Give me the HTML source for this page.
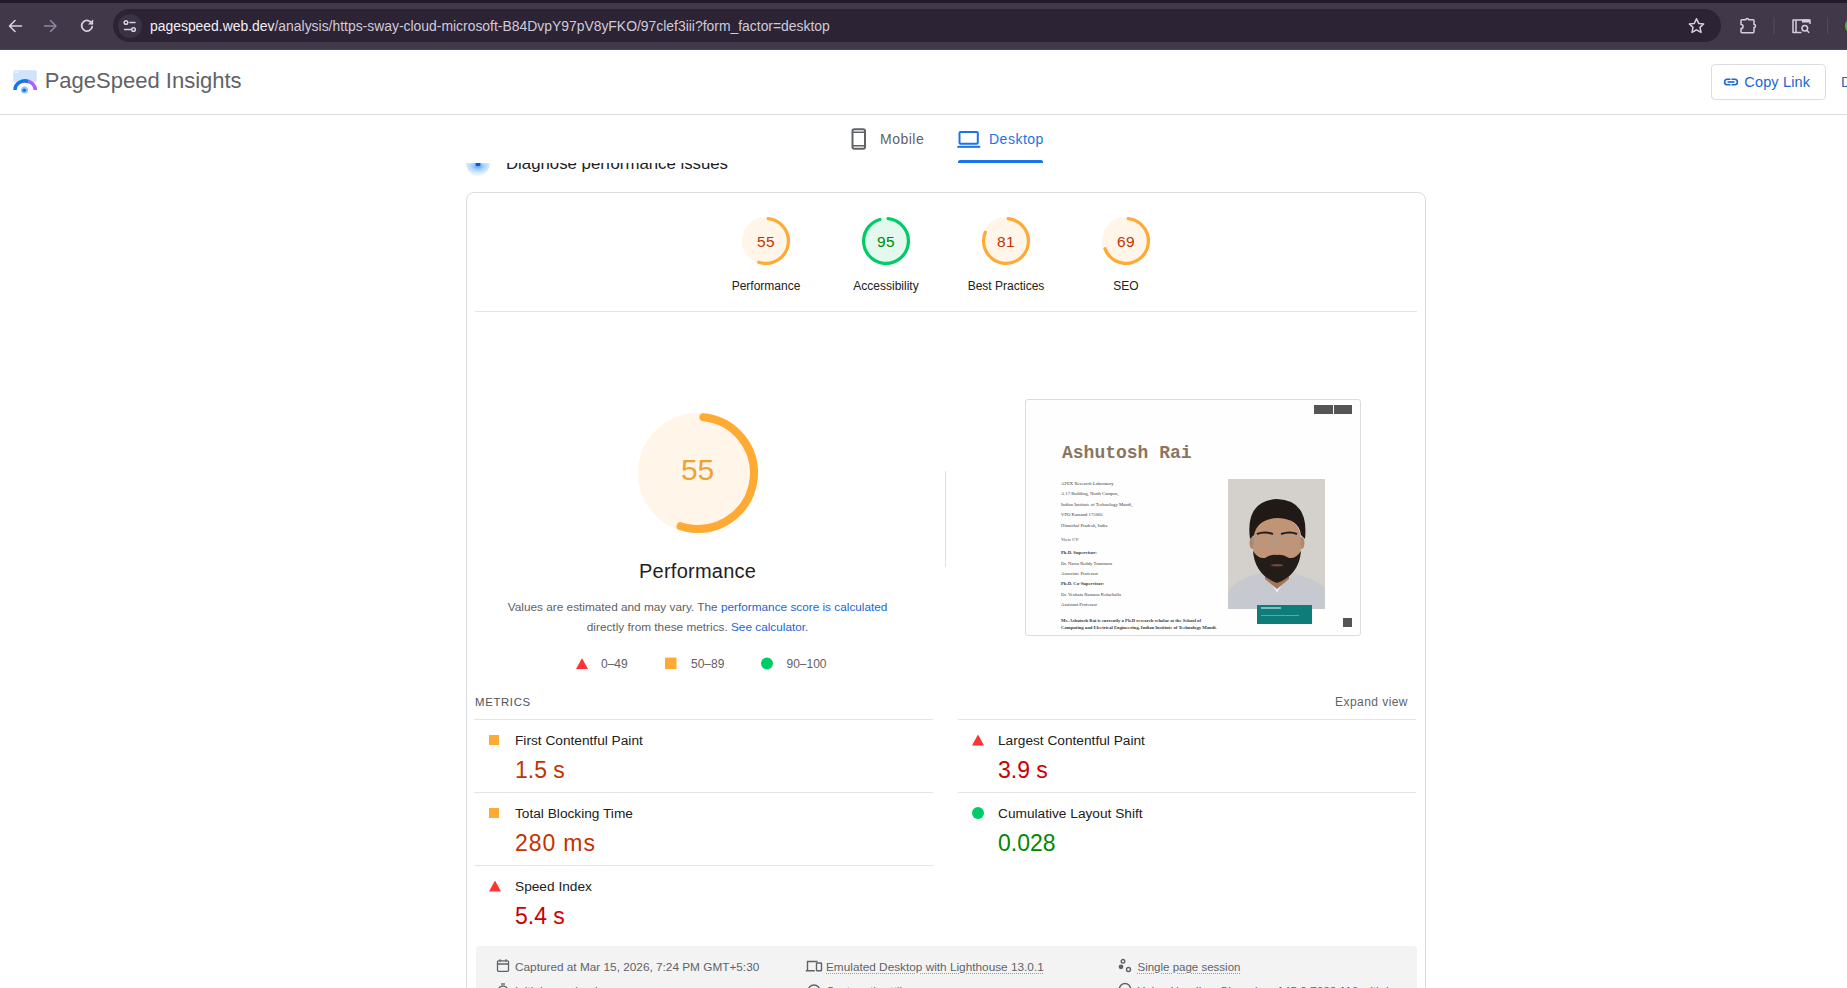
<!DOCTYPE html>
<html><head><meta charset="utf-8">
<style>
*{margin:0;padding:0;box-sizing:border-box}
html,body{width:1847px;height:988px;overflow:hidden;background:#fff;font-family:"Liberation Sans",sans-serif;color:#212121}
.a{position:absolute;white-space:nowrap}
svg{position:absolute;overflow:visible}
/* chrome */
#chrome{position:absolute;left:0;top:0;width:1847px;height:50px;background:#413849;border-bottom:1px solid #4a4850}
#strip{position:absolute;left:0;top:0;width:1847px;height:3px;background:#221b2c}
#omni{position:absolute;left:113px;top:9.3px;width:1608px;height:32.8px;border-radius:17px;background:#2c2435}
#siteinfo{position:absolute;left:118px;top:14px;width:24px;height:24px;border-radius:12px;background:#3a3245}
.url{font-size:13.91px;line-height:14px;top:19px;left:150px;color:#d0cad8}
.url b{font-weight:normal;color:#f2eef6}
/* psi header */
#hdr{position:absolute;left:0;top:50px;width:1847px;height:65px;background:#fff;border-bottom:1px solid #dadce0}
.card{position:absolute;left:466px;top:192px;width:960px;height:900px;border:1px solid #dadce0;border-radius:8px;background:#fff}
.hr{position:absolute;height:1px;background:#e4e4e4}
.rt{font-size:11.8px;line-height:12px;color:#5f6368}
.tl{left:35px;font-family:'Liberation Serif',serif;font-size:4.7px;line-height:6px;color:#3a3a3a}
.ul{text-decoration:underline dotted #9a9a9a;text-underline-offset:2px}
</style></head><body>

<!-- ============ BROWSER CHROME ============ -->
<div id="chrome">
  <div id="strip"></div>
  <svg style="left:0;top:0" width="110" height="50">
    <g fill="none" stroke="#d8d0e0" stroke-width="1.6" stroke-linecap="round" stroke-linejoin="round">
      <path d="M21.5 26H9.5M15 20.5L9.5 26l5.5 5.5"/>
    </g>
    <g fill="none" stroke="#8e86a0" stroke-width="1.6" stroke-linecap="round" stroke-linejoin="round">
      <path d="M44.5 26h11.5M50.5 20.5l5.5 5.5-5.5 5.5"/>
    </g>
    <g fill="none" stroke="#d8d0e0" stroke-width="1.8" stroke-linecap="round">
      <path d="M91.8 23.6A5.3 5.3 0 1 0 92.2 26.6"/>
    </g>
    <path d="M93.2 19.3v5.3h-5.3z" fill="#d8d0e0"/>
  </svg>
  <div id="omni"></div>
  <div id="siteinfo"></div>
  <svg style="left:118px;top:14px" width="24" height="24">
    <g fill="none" stroke="#d8d0e0" stroke-width="1.5" stroke-linecap="round">
      <circle cx="8" cy="8.5" r="1.8"/><path d="M12 8.5h5"/>
      <circle cx="15.5" cy="15.5" r="1.8"/><path d="M6.5 15.5h6.5"/>
    </g>
  </svg>
  <div class="a url"><b>pagespeed.web.dev</b>/analysis/https-sway-cloud-microsoft-B84DvpY97pV8yFKO/97clef3iii?form_factor=desktop</div>
  <svg style="left:1660px;top:0" width="187" height="50">
    <g fill="none" stroke="#d8d0e0" stroke-width="1.5" stroke-linejoin="round">
      <path d="M36.5 18.8l2.2 4.6 5 .6-3.7 3.4 1 5-4.5-2.5-4.5 2.5 1-5-3.7-3.4 5-.6z"/>
      <path d="M82 19.8H85.8A1.4 1.4 0 0 1 88.6 19.8H93a1 1 0 0 1 1 1V24.4A1.5 1.5 0 0 1 94 27.4V31.8a1 1 0 0 1-1 1H82a1 1 0 0 1-1-1V28.6A2.1 2.1 0 0 0 81 24.4V20.8a1 1 0 0 1 1-1z"/>
      <path d="M141.5 32.5h-8.5v-12.5h17v4"/>
      <circle cx="144.8" cy="28.2" r="2.8"/><path d="M147 30.5l2.2 2.3"/>
      <path d="M136 20.5v12"/>
    </g>
    <rect x="142" y="19.5" width="7.5" height="3" fill="#d8d0e0"/>
    <rect x="113.5" y="17" width="1" height="17" fill="#554d62"/>
    <rect x="167.2" y="17" width="1" height="17" fill="#554d62"/>
    <circle cx="193" cy="26" r="8" fill="#4caf50"/>
  </svg>
</div>

<!-- ============ PSI HEADER ============ -->
<div id="hdr"></div>
<svg style="left:12px;top:69px" width="26" height="26" viewBox="0 0 26 26">
  <rect x="1.3" y="1.2" width="23.4" height="12" rx="1.5" fill="#cfe3fb"/>
  <rect x="2.5" y="2.5" width="4" height="1.2" fill="#fff" opacity=".8"/>
  <path d="M3 21a10 9 0 0 1 13.5-8.5" fill="none" stroke="#1a73e8" stroke-width="3.6"/>
  <path d="M16.5 12.5a10 9 0 0 1 6.8 8.5" fill="none" stroke="#b15cf2" stroke-width="3.6"/>
  <circle cx="12.5" cy="21" r="3.6" fill="#8ec5fb"/>
  <circle cx="12.3" cy="21.3" r="1.8" fill="#1a73e8"/>
</svg>
<div class="a" style="left:44.7px;top:70.1px;font-size:22px;line-height:22px;color:#5f6368">PageSpeed Insights</div>
<div class="a" style="left:1711px;top:64px;width:115px;height:36px;border:1px solid #dadce0;border-radius:4px"></div>
<svg style="left:1722px;top:74px" width="18" height="16" viewBox="0 0 18 16">
  <g fill="none" stroke="#1a66d0" stroke-width="1.6">
    <path d="M8.5 5.3H5.3a2.7 2.7 0 0 0 0 5.4h3.2M9.5 5.3h3.2a2.7 2.7 0 0 1 0 5.4H9.5"/>
    <path d="M5.5 8h7"/>
  </g>
</svg>
<div class="a" style="left:1744.3px;top:75px;font-size:14.5px;line-height:14.5px;letter-spacing:.15px;color:#1a66d0">Copy Link</div>
<div class="a" style="left:1841px;top:75px;font-size:14.5px;line-height:14.5px;color:#1a66d0">D</div>

<!-- ============ CONTENT (scrolling) ============ -->
<svg style="left:462px;top:150px" width="32" height="28" viewBox="0 0 32 28">
  <defs><radialGradient id="dg" cx="50%" cy="30%" r="65%"><stop offset="0" stop-color="#5aa6f2"/><stop offset=".45" stop-color="#b5d9fb"/><stop offset="1" stop-color="#f2f7ff"/></radialGradient></defs>
  <path d="M4 12a12 14 0 0 0 24 0z" fill="url(#dg)"/>
  <rect x="13.5" y="12.5" width="5" height="3.5" rx="1.5" fill="#0b5ccc"/>
</svg>
<div class="a" style="left:506px;top:154.8px;font-size:16.8px;line-height:17px;color:#202124">Diagnose performance issues</div>

<div class="card"></div>

<!-- small gauges -->
<svg style="left:742px;top:216.5px" width="48" height="48" viewBox="0 0 120 120">
  <circle cx="60" cy="60" r="56" fill="#fa3" stroke="#fa3" stroke-width="8" opacity=".1"/>
  <circle cx="60" cy="60" r="56" fill="none" stroke="#fa3" stroke-width="8" stroke-linecap="round" stroke-dasharray="188.1 400" transform="rotate(-84.5 60 60)"/>
</svg>
<svg style="left:862px;top:216.5px" width="48" height="48" viewBox="0 0 120 120">
  <circle cx="60" cy="60" r="56" fill="#0c6" stroke="#0c6" stroke-width="8" opacity=".1"/>
  <circle cx="60" cy="60" r="56" fill="none" stroke="#0c6" stroke-width="8" stroke-linecap="round" stroke-dasharray="328.9 400" transform="rotate(-84.5 60 60)"/>
</svg>
<svg style="left:982px;top:216.5px" width="48" height="48" viewBox="0 0 120 120">
  <circle cx="60" cy="60" r="56" fill="#fa3" stroke="#fa3" stroke-width="8" opacity=".1"/>
  <circle cx="60" cy="60" r="56" fill="none" stroke="#fa3" stroke-width="8" stroke-linecap="round" stroke-dasharray="279.6 400" transform="rotate(-84.5 60 60)"/>
</svg>
<svg style="left:1102px;top:216.5px" width="48" height="48" viewBox="0 0 120 120">
  <circle cx="60" cy="60" r="56" fill="#fa3" stroke="#fa3" stroke-width="8" opacity=".1"/>
  <circle cx="60" cy="60" r="56" fill="none" stroke="#fa3" stroke-width="8" stroke-linecap="round" stroke-dasharray="237.4 400" transform="rotate(-84.5 60 60)"/>
</svg>
<div class="a" style="left:716px;width:100px;text-align:center;top:234px;font-size:15.5px;line-height:16px;letter-spacing:.5px;color:#c33300">55</div>
<div class="a" style="left:836px;width:100px;text-align:center;top:234px;font-size:15.5px;line-height:16px;letter-spacing:.5px;color:#080">95</div>
<div class="a" style="left:956px;width:100px;text-align:center;top:234px;font-size:15.5px;line-height:16px;letter-spacing:.5px;color:#c33300">81</div>
<div class="a" style="left:1076px;width:100px;text-align:center;top:234px;font-size:15.5px;line-height:16px;letter-spacing:.5px;color:#c33300">69</div>
<div class="a" style="left:706px;width:120px;text-align:center;top:280.4px;font-size:12px;line-height:12px">Performance</div>
<div class="a" style="left:826px;width:120px;text-align:center;top:280.4px;font-size:12px;line-height:12px">Accessibility</div>
<div class="a" style="left:946px;width:120px;text-align:center;top:280.4px;font-size:12px;line-height:12px">Best Practices</div>
<div class="a" style="left:1066px;width:120px;text-align:center;top:280.4px;font-size:12px;line-height:12px">SEO</div>
<div class="hr" style="left:475px;top:311px;width:942px"></div>

<!-- big gauge -->
<svg style="left:637.6px;top:412.6px" width="120" height="120" viewBox="0 0 120 120">
  <circle cx="60" cy="60" r="56" fill="#fa3" stroke="#fa3" stroke-width="8" opacity=".1"/>
  <circle cx="60" cy="60" r="56" fill="none" stroke="#fa3" stroke-width="8" stroke-linecap="round" stroke-dasharray="188.1 400" transform="rotate(-84.5 60 60)"/>
</svg>
<div class="a" style="left:597.6px;width:200px;text-align:center;top:455px;font-size:30px;line-height:30px;color:#eea232">55</div>
<div class="a" style="left:547.6px;width:300px;text-align:center;top:560.9px;font-size:20px;line-height:20px;letter-spacing:.25px;color:#212121">Performance</div>
<div class="a" style="left:447.6px;width:500px;text-align:center;top:596.5px;font-size:11.8px;line-height:20px;color:#616161;white-space:normal">Values are estimated and may vary. The <span style="color:#1b66d0">performance score is calculated</span><br>directly from these metrics. <span style="color:#1b66d0">See calculator.</span></div>
<svg style="left:570px;top:650px" width="270" height="25">
  <path d="M12 8.2l6 10.8H6z" fill="#f33"/>
  <rect x="95" y="7.6" width="11.5" height="11.5" fill="#fa3"/>
  <circle cx="197" cy="13.5" r="6" fill="#0c6"/>
</svg>
<div class="a" style="left:601px;top:657.8px;font-size:12px;line-height:12px;color:#616161">0–49</div>
<div class="a" style="left:691px;top:657.8px;font-size:12px;line-height:12px;color:#616161">50–89</div>
<div class="a" style="left:786.5px;top:657.8px;font-size:12px;line-height:12px;color:#616161">90–100</div>
<div class="a" style="left:945px;top:471px;width:1px;height:96px;background:#e0e0e0"></div>

<!-- screenshot thumb -->
<div id="thumb" class="a" style="left:1025px;top:399px;width:336px;height:237px;border:1px solid #dcdcdc;border-radius:3px;background:#fefefe;overflow:hidden">
    <div class="a" style="left:288px;top:5px;width:19px;height:8.5px;background:#555"></div>
  <div class="a" style="left:308px;top:5px;width:17.5px;height:8.5px;background:#555"></div>
  <div class="a" style="left:36px;top:44px;font-family:'Liberation Mono',monospace;font-weight:bold;font-size:18px;line-height:18px;color:#8a7560">Ashutosh Rai</div>
  <div class="a tl" style="top:81px">AFEX Research Laboratory</div>
  <div class="a tl" style="top:91.3px">A 17 Building, North Campus,</div>
  <div class="a tl" style="top:101.7px">Indian Institute of Technology Mandi,</div>
  <div class="a tl" style="top:112px">VPO Kamand 175005</div>
  <div class="a tl" style="top:122.7px">Himachal Pradesh, India</div>
  <div class="a tl" style="top:136.8px">View CV</div>
  <div class="a tl" style="top:150.3px;font-weight:bold">Ph.D. Supervisor:</div>
  <div class="a tl" style="top:160.6px">Dr. Narsa Reddy Tummuru</div>
  <div class="a tl" style="top:170.9px">Associate Professor</div>
  <div class="a tl" style="top:181.2px;font-weight:bold">Ph.D. Co-Supervisor:</div>
  <div class="a tl" style="top:191.6px">Dr. Venkata Ramana Kolachalla</div>
  <div class="a tl" style="top:201.9px">Assistant Professor</div>
  <div class="a tl" style="top:217.7px;font-weight:bold">Ms. Ashutosh Rai is currently a Ph.D research scholar at the School of</div>
  <div class="a tl" style="top:225px;font-weight:bold">Computing and Electrical Engineering, Indian Institute of Technology Mandi.</div>
  <svg style="left:202px;top:79px" width="97" height="130" viewBox="0 0 97 130">
    <rect width="97" height="130" fill="#d4d0cb"/>
    <path d="M0 114 Q6 102 26 96 L36 92 L62 92 L72 96 Q91 102 97 110 V130 H0z" fill="#c6c9cf"/>
    <path d="M36 92 L49 114 L62 92 L58 100 L49 108 L40 100z" fill="#e6eaf0"/>
    <path d="M37 86 H61 V100 L49 110 L37 100z" fill="#a47659"/>
    <ellipse cx="24.5" cy="64" rx="3" ry="6" fill="#b3866a"/>
    <ellipse cx="73.5" cy="64" rx="3" ry="6" fill="#b3866a"/>
    <ellipse cx="49" cy="68" rx="24" ry="33" fill="#c29476"/><path d="M25 60 Q26 40 49 38 Q72 40 73 60z" fill="#c29476"/>
    <path d="M22 60 Q17 22 49 20 Q81 21 77 60 L73 56 Q71 40 50 39 Q29 40 26 56z" fill="#201915"/>
    <path d="M29 55 Q36 52 45 55 M53 55 Q62 52 69 55" stroke="#2a201b" stroke-width="2.2" fill="none"/>
    <g fill="none" stroke="#a49d97" stroke-width="1.2"><rect x="26.5" y="57" width="20" height="11" rx="3"/><rect x="51.5" y="57" width="20" height="11" rx="3"/><path d="M46.5 60h5"/></g>
    <path d="M25 72 Q27 96 49 104 Q71 96 73 72 Q68 80 61 79 Q55 75 49 76 Q43 75 37 79 Q30 80 25 72z" fill="#241c18"/>
    <path d="M42 86 Q49 84 56 86 Q49 89 42 86z" fill="#6e4c3c"/>
  </svg>
  <div class="a" style="left:231px;top:204.5px;width:55px;height:19px;background:#0e7d79"></div>
  <div class="a" style="left:235px;top:207px;width:20px;height:2px;background:#7fbfbc"></div>
  <div class="a" style="left:235px;top:214.5px;width:38px;height:1.5px;background:#5aa9a5"></div>
  <div class="a" style="left:317px;top:218px;width:9px;height:9px;background:#555"></div>
</div>

<!-- metrics -->
<div class="a" style="left:475px;top:695.8px;font-size:11.4px;line-height:12px;color:#505357;letter-spacing:.65px">METRICS</div>
<div class="a" style="left:1335px;top:695.8px;font-size:12px;line-height:12px;color:#5f6368;letter-spacing:.45px">Expand view</div>
<div class="hr" style="left:474px;top:719px;width:459px"></div>
<div class="hr" style="left:474px;top:792px;width:459px"></div>
<div class="hr" style="left:474px;top:865px;width:459px"></div>
<div class="hr" style="left:958px;top:719px;width:458px"></div>
<div class="hr" style="left:958px;top:792px;width:458px"></div>

<div class="a" style="left:489px;top:735px;width:10px;height:10px;background:#fa3"></div>
<div class="a" style="left:515px;top:733.9px;font-size:13.7px;line-height:14px">First Contentful Paint</div>
<div class="a" style="left:515px;top:758.4px;font-size:23px;line-height:24px;color:#c33300">1.5 s</div>

<div class="a" style="left:489px;top:808px;width:10px;height:10px;background:#fa3"></div>
<div class="a" style="left:515px;top:806.9px;font-size:13.7px;line-height:14px">Total Blocking Time</div>
<div class="a" style="left:515px;top:831.4px;font-size:23px;line-height:24px;letter-spacing:.9px;color:#c33300">280 ms</div>

<svg style="left:488.5px;top:879px" width="14" height="14"><path d="M6 1.5l6 11H0z" fill="#f33"/></svg>
<div class="a" style="left:515px;top:879.9px;font-size:13.7px;line-height:14px">Speed Index</div>
<div class="a" style="left:515px;top:904.4px;font-size:23px;line-height:24px;color:#c00">5.4 s</div>

<svg style="left:972px;top:733px" width="14" height="14"><path d="M6 1.5l6 11H0z" fill="#f33"/></svg>
<div class="a" style="left:998px;top:733.9px;font-size:13.7px;line-height:14px">Largest Contentful Paint</div>
<div class="a" style="left:998px;top:758.4px;font-size:23px;line-height:24px;color:#c00">3.9 s</div>

<div class="a" style="left:972px;top:807px;width:12px;height:12px;border-radius:6px;background:#0c6"></div>
<div class="a" style="left:998px;top:806.9px;font-size:13.7px;line-height:14px">Cumulative Layout Shift</div>
<div class="a" style="left:998px;top:831.4px;font-size:23px;line-height:24px;color:#080">0.028</div>

<!-- runtime settings -->
<div class="a" style="left:476px;top:946px;width:941px;height:80px;background:#f3f3f3;border-radius:3px"></div>
<svg style="left:496px;top:958px" width="14" height="36" viewBox="0 0 14 36">
  <g fill="none" stroke="#5f6368" stroke-width="1.3">
    <rect x="1.5" y="2.8" width="11" height="10.5" rx="1"/>
    <path d="M1.5 6h11M4 1.3v2.5M10 1.3v2.5"/>
    <circle cx="7" cy="33" r="5"/><path d="M5 26h4"/>
  </g>
</svg>
<div class="a rt" style="left:515px;top:960.5px">Captured at Mar 15, 2026, 7:24 PM GMT+5:30</div>
<div class="a rt" style="left:515px;top:984.5px">Initial page load</div>
<svg style="left:805px;top:958px" width="18" height="36" viewBox="0 0 18 36">
  <g fill="none" stroke="#5f6368" stroke-width="1.4">
    <path d="M2.5 12.5V3.5h10M0.8 12.8h9"/>
    <rect x="11.5" y="5" width="5" height="7.8" rx=".6"/>
    <path d="M3 33a6 6 0 0 1 12 0"/>
  </g>
</svg>
<div class="a rt ul" style="left:826px;top:960.5px">Emulated Desktop with Lighthouse 13.0.1</div>
<div class="a rt ul" style="left:826px;top:984.5px">Custom throttling</div>
<svg style="left:1117px;top:958px" width="16" height="36" viewBox="0 0 16 36">
  <g fill="none" stroke="#5f6368" stroke-width="1.4">
    <circle cx="6" cy="3.3" r="1.8"/>
    <circle cx="11.5" cy="11.5" r="2"/>
    <circle cx="8" cy="31" r="5.5"/>
  </g>
  <circle cx="4" cy="8.8" r="2.4" fill="#5f6368"/>
</svg>
<div class="a rt ul" style="left:1137.5px;top:960.5px;font-size:11.5px">Single page session</div>
<div class="a rt ul" style="left:1137px;top:984.5px">Using HeadlessChromium 145.0.7632.116 with lr</div>

<!-- ============ TABS (sticky) ============ -->
<div class="a" style="left:0;top:115px;width:1847px;height:48px;background:#fff"></div>
<svg style="left:851px;top:128px" width="16" height="22" viewBox="0 0 16 22">
  <rect x="1.5" y="1.2" width="12.5" height="19.6" rx="1.8" fill="none" stroke="#5f6368" stroke-width="2"/>
  <path d="M1.5 4.3h12.5M1.5 17.7h12.5" stroke="#5f6368" stroke-width="1.5"/>
</svg>
<div class="a" style="left:880px;top:132px;font-size:14px;line-height:14px;color:#5f6368;letter-spacing:.5px">Mobile</div>
<svg style="left:957px;top:130px" width="24" height="19" viewBox="0 0 24 19">
  <rect x="2.5" y="2" width="18.3" height="11.8" rx="1" fill="none" stroke="#1a73e8" stroke-width="2"/>
  <rect x="0.3" y="15.8" width="23" height="2" fill="#1a73e8"/>
</svg>
<div class="a" style="left:989px;top:132px;font-size:14px;line-height:14px;color:#1a73e8;letter-spacing:.5px">Desktop</div>
<div class="a" style="left:958px;top:160px;width:85px;height:3px;background:#1a73e8;border-radius:2px 2px 0 0"></div>

</body></html>
